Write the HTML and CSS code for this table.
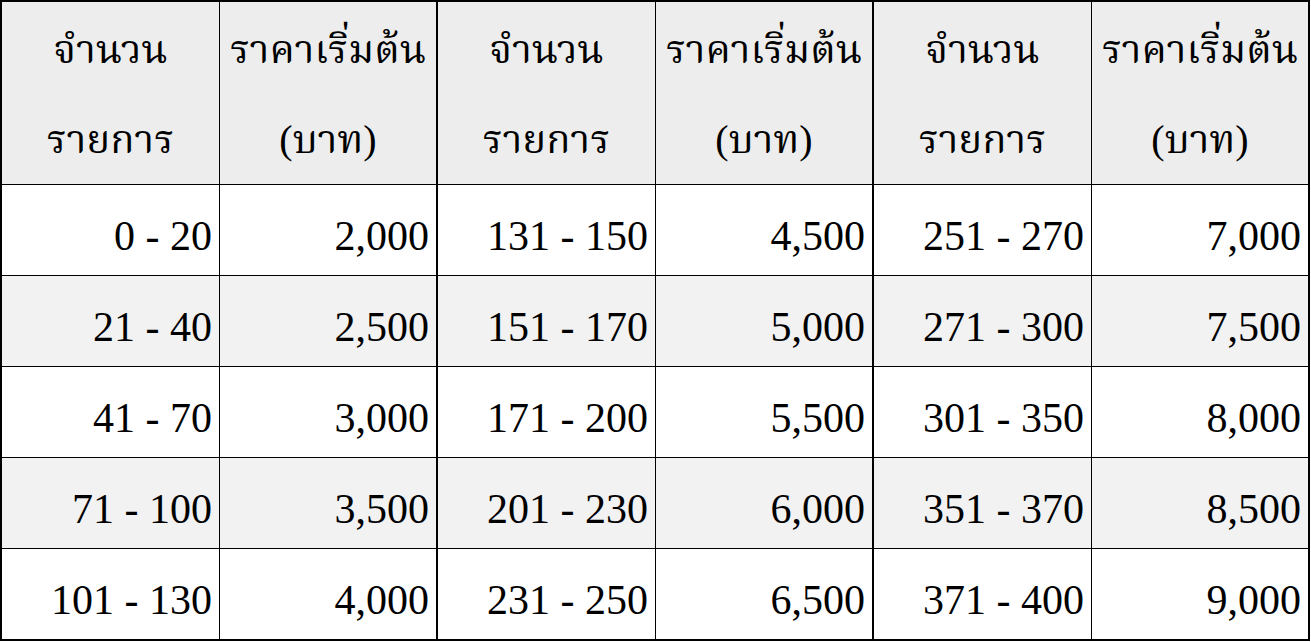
FILE: index.html
```html
<!DOCTYPE html>
<html lang="th">
<head>
<meta charset="utf-8">
<title>ราคาเริ่มต้น</title>
<link rel="stylesheet" href="styles.css">
</head>
<body>
<table class="price">
  <thead>
    <tr class="head">
      <th>จำนวน<br>รายการ</th>
      <th class="thick">ราคาเริ่มต้น<br>(บาท)</th>
      <th>จำนวน<br>รายการ</th>
      <th class="thick">ราคาเริ่มต้น<br>(บาท)</th>
      <th>จำนวน<br>รายการ</th>
      <th class="thick">ราคาเริ่มต้น<br>(บาท)</th>
    </tr>
  </thead>
  <tbody>
    <tr>
      <td>0 - 20</td><td class="thick">2,000</td>
      <td>131 - 150</td><td class="thick">4,500</td>
      <td>251 - 270</td><td class="thick">7,000</td>
    </tr>
    <tr class="alt">
      <td>21 - 40</td><td class="thick">2,500</td>
      <td>151 - 170</td><td class="thick">5,000</td>
      <td>271 - 300</td><td class="thick">7,500</td>
    </tr>
    <tr>
      <td>41 - 70</td><td class="thick">3,000</td>
      <td>171 - 200</td><td class="thick">5,500</td>
      <td>301 - 350</td><td class="thick">8,000</td>
    </tr>
    <tr class="alt">
      <td>71 - 100</td><td class="thick">3,500</td>
      <td>201 - 230</td><td class="thick">6,000</td>
      <td>351 - 370</td><td class="thick">8,500</td>
    </tr>
    <tr class="last">
      <td>101 - 130</td><td class="thick">4,000</td>
      <td>231 - 250</td><td class="thick">6,500</td>
      <td>371 - 400</td><td class="thick">9,000</td>
    </tr>
  </tbody>
</table>
</body>
</html>
```

FILE: styles.css
```css
html, body {
  margin: 0;
  padding: 0;
  background: #ffffff;
}

.price {
  border-collapse: separate;
  border-spacing: 0;
  table-layout: fixed;
  width: 1310px;
  border-top: 2px solid #000;
  border-left: 2px solid #000;
  font-family: "Liberation Serif", "Noto Serif Thai", "Noto Sans Thai", "Loma", "Garuda", "Tlwg Typo", serif;
  font-size: 42px;
  color: #000;
}

.price th,
.price td {
  box-sizing: border-box;
  width: 218px;
  padding: 0;
  border-right: 1px solid #000;
  border-bottom: 1px solid #000;
}

.price .thick {
  border-right-width: 2px;
}

.head th {
  height: 183px;
  background: #ededed;
  font-weight: normal;
  font-size: 40px;
  text-align: center;
  padding-top: 3px;
  line-height: 89.5px;
  vertical-align: top;
}

.price td {
  height: 91px;
  text-align: right;
  padding-right: 7px;
  padding-top: 12px;
  line-height: 78px;
  vertical-align: top;
}

.price .alt td {
  background: #f2f2f2;
}

.price .last td {
  height: 92px;
  border-bottom-width: 2px;
}
```
